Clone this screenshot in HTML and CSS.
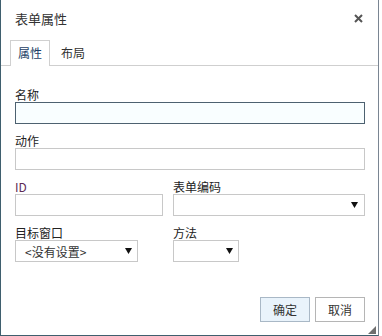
FILE: index.html
```html
<!DOCTYPE html>
<html lang="zh">
<head>
  <meta charset="UTF-8"/>
  <title>表单属性</title>
  <link rel="stylesheet" href="styles.css">
</head>
<body>

<div class="dialog">

  <div class="titlebar">
    <span class="title">表单属性</span>
    <svg class="close" width="9" height="9" viewBox="0 0 9 9">
      <path d="M1 1 L8 8 M8 1 L1 8" stroke="#555" stroke-width="2"/>
    </svg>
  </div>

  <div class="tabs">
    <div class="tab active">属性</div>
    <div class="tab">布局</div>
  </div>

  <div class="form">
    <div class="field">
      <label>名称</label>
      <div class="input focus"></div>
    </div>

    <div class="field">
      <label>动作</label>
      <div class="input"></div>
    </div>

    <div class="row">
      <div class="field">
        <label class="id-label">ID</label>
        <div class="input"></div>
      </div>
      <div class="field">
        <label>表单编码</label>
        <div class="input select">
          <span></span>
          <svg class="arrow" width="7" height="6" viewBox="0 0 7 6"><path d="M0 0 H7 L3.5 6 Z" fill="#111"/></svg>
        </div>
      </div>
    </div>

    <div class="row">
      <div class="field">
        <label>目标窗口</label>
        <div class="input select target">
          <span>&lt;没有设置&gt;</span>
          <svg class="arrow" width="7" height="6" viewBox="0 0 7 6"><path d="M0 0 H7 L3.5 6 Z" fill="#111"/></svg>
        </div>
      </div>
      <div class="field">
        <label>方法</label>
        <div class="input select method">
          <span></span>
          <svg class="arrow" width="7" height="6" viewBox="0 0 7 6"><path d="M0 0 H7 L3.5 6 Z" fill="#111"/></svg>
        </div>
      </div>
    </div>
  </div>

  <div class="buttons">
    <button class="ok">确定</button>
    <button>取消</button>
  </div>

  <div class="grip"></div>

</div>

</body>
</html>
```

FILE: styles.css
```css
* {
  box-sizing: border-box;
}

body {
  margin: 0;
  padding: 0;
  background: #fff;
  font-family: "Noto Sans CJK SC", "Liberation Sans", sans-serif;
  color: #222;
}

.dialog {
  position: relative;
  width: 379px;
  height: 336px;
  border-left: 1px solid #3f5f6e;
  border-right: 1px solid #7a8592;
  border-bottom: 1px solid #3f5f6e;
  background: #fff;
}

.titlebar {
  height: 36px;
  display: flex;
  align-items: center;
  justify-content: space-between;
  padding: 0 15px 0 14px;
}

.title {
  font-size: 13px;
  color: #333;
}

.close {
  display: block;
  margin-top: 1px;
}

.tabs {
  display: flex;
  padding: 4px 0 0 9px;
  height: 30px;
  border-bottom: 1px solid #cfcfcf;
}

.tab {
  height: 26px;
  padding: 0 10px;
  font-size: 12px;
  line-height: 24px;
  color: #333;
  border: 1px solid transparent;
  border-bottom: none;
}

.tab.active {
  border-color: #d0d0d0;
  background: #fff;
  color: #1d3f66;
  width: 40px;
  padding: 0;
  text-align: center;
}

.form {
  padding: 22px 13px 0 14px;
}

.field {
  margin-bottom: 10px;
}

label {
  display: block;
  font-size: 12px;
  line-height: 14px;
  height: 14px;
  color: #222;
}

.id-label {
  color: #5e2a55;
}

.input {
  height: 22px;
  border: 1px solid #c8c8c8;
  background: #fff;
}

.input.focus {
  border-color: #4d6170;
  background: #f9feff;
}

.row {
  display: grid;
  grid-template-columns: 148px 192px;
  column-gap: 10px;
}

.select {
  display: flex;
  align-items: center;
  justify-content: space-between;
  padding: 0 6px 0 9px;
  font-size: 12px;
  color: #333;
}

.arrow {
  display: block;
}

.target {
  width: 123px;
  padding-right: 5px;
}

.method {
  width: 66px;
  padding-right: 5px;
}

.buttons {
  display: flex;
  justify-content: flex-end;
  gap: 5px;
  padding: 25px 13px 0 0;
}

button {
  width: 50px;
  height: 25px;
  font-family: "Noto Sans CJK SC", "Liberation Sans", sans-serif;
  font-size: 12px;
  color: #333;
  background: #fff;
  border: 1px solid #b5b5b5;
  padding: 0;
}

button.ok {
  background: #e9f3fb;
  border-color: #a9b8c6;
}

.grip {
  position: absolute;
  right: 2px;
  bottom: 1px;
  width: 0;
  height: 0;
  border-left: 8px solid transparent;
  border-bottom: 8px solid #6f6f6f;
}
```
